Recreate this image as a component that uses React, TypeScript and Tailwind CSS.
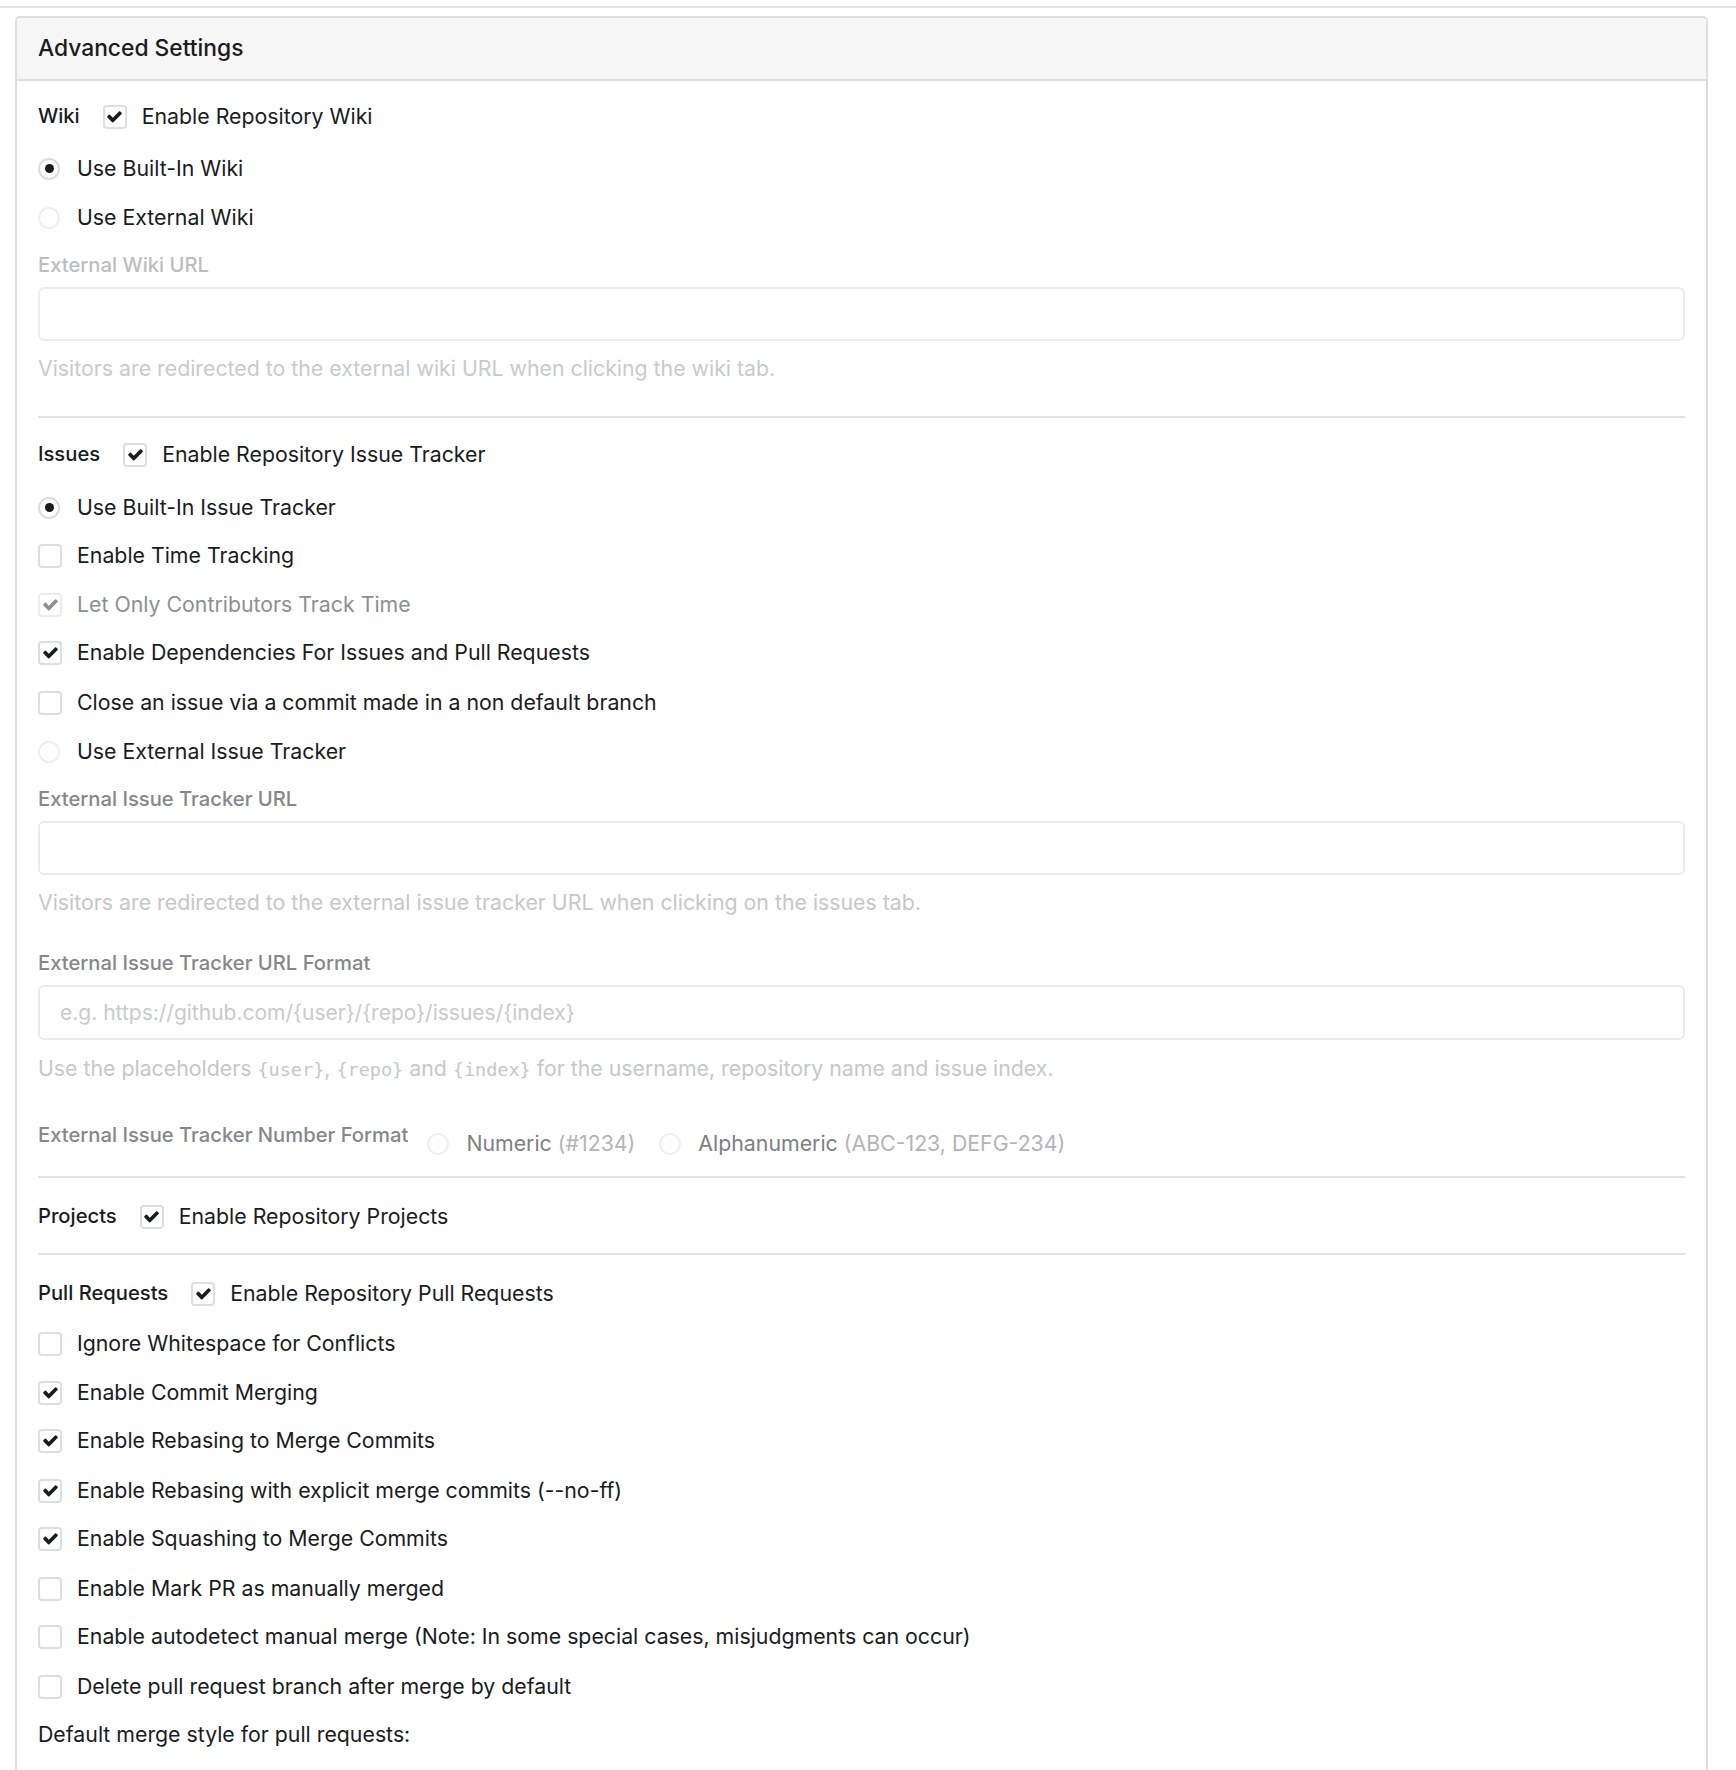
import type { ReactNode } from "react";

const FONT = { fontFamily: "Inter, 'Noto Sans', sans-serif" };
const MONO = { fontFamily: "'DejaVu Sans Mono', 'Liberation Mono', monospace" };

// heavy check glyph, same shape as the icon font's "check"
function Tick({ color }: { color: string }) {
  return (
    <svg viewBox="0 0 1792 1792" className="h-[17px] w-[17px]">
      <path
        fill={color}
        d="M1671 566q0 40-28 68l-724 724-136 136q-28 28-68 28t-68-28l-136-136-362-362q-28-28-28-68t28-68l136-136q28-28 68-28t68 28l294 295 656-657q28-28 68-28t68 28l136 136q28 28 28 68z"
      />
    </svg>
  );
}

function Box({ checked, disabled }: { checked?: boolean; disabled?: boolean }) {
  return (
    <span
      className={
        "flex h-[24px] w-[24px] shrink-0 items-center justify-center rounded-[4px] border-2 bg-white " +
        (disabled ? "border-[#ececec]" : "border-[#dedede]")
      }
    >
      {checked && <Tick color={disabled ? "#8d8f92" : "#181c21"} />}
    </span>
  );
}

function Radio({ checked, faint }: { checked?: boolean; faint?: boolean }) {
  return (
    <span className="flex h-[24px] w-[24px] shrink-0 items-center">
      <span
        className={
          "flex h-[22px] w-[22px] items-center justify-center rounded-full border-2 bg-white " +
          (faint ? "border-[#efefef]" : "border-[#dcdcdc]")
        }
      >
        {checked && <span className="h-[9px] w-[9px] rounded-full bg-[#181c21]" />}
      </span>
    </span>
  );
}

function Row({
  className = "",
  control,
  children,
  muted,
}: {
  className?: string;
  control: ReactNode;
  children: ReactNode;
  muted?: boolean;
}) {
  return (
    <div className={"flex h-[27px] items-center " + className}>
      {control}
      <span className={"ml-[15px] text-[21.3px] leading-[27px] " + (muted ? "text-[#8d8f92]" : "text-[#181c21]")}>
        {children}
      </span>
    </div>
  );
}

// inline header row: section name, then the enabling checkbox
function Toggle({ className = "", name, children }: { className?: string; name: string; children: ReactNode }) {
  return (
    <div className={"flex h-[27px] items-center " + className}>
      <span className="mr-[23px] text-[20.2px] font-medium text-[#181c21]">{name}</span>
      <Box checked />
      <span className="ml-[15px] text-[21.3px] leading-[27px] text-[#181c21]">{children}</span>
    </div>
  );
}

function Divider({ className = "" }: { className?: string }) {
  return <div className={"h-[2px] bg-[#e2e2e2] " + className} />;
}

function Code({ children }: { children: ReactNode }) {
  return (
    <code style={MONO} className="text-[18.5px]">
      {children}
    </code>
  );
}

export default function App() {
  return (
    <div style={FONT} className="min-h-screen bg-white pb-10">
      <div className="mt-[6px] h-[2px] bg-[#e3e3e3]" />

      <div className="ml-[15px] mr-[28px] mt-[8px] rounded-t-[5px] border-2 border-b-0 border-[#dedede]">
        <div className="flex h-[63px] items-center rounded-t-[4px] border-b-2 border-[#dedede] bg-[#f6f6f6] px-[21px]">
          <h4 className="text-[22.8px] font-medium text-[#181c21]">Advanced Settings</h4>
        </div>

        <div className="flex flex-col px-[21px] pt-[22px] pb-[40px]">
          {/* wiki */}
          <Toggle name="Wiki">Enable Repository Wiki</Toggle>
          <Row className="mt-[25px]" control={<Radio checked />}>Use Built-In Wiki</Row>
          <Row className="mt-[22px]" control={<Radio faint />}>Use External Wiki</Row>
          <label className="mt-[22px] text-[20.2px] font-medium leading-[24px] text-[#bcbdbf]">External Wiki URL</label>
          <input
            disabled
            className="mt-[10px] h-[54px] w-full rounded-[6px] border-2 border-[#ededed] bg-white px-[20px] text-[21px]"
          />
          <p className="mt-[15px] text-[21.3px] leading-[24px] text-[#c9cacc]">
            Visitors are redirected to the external wiki URL when clicking the wiki tab.
          </p>
          <Divider className="mt-[36px]" />

          {/* issues */}
          <Toggle className="mt-[23px]" name="Issues">Enable Repository Issue Tracker</Toggle>
          <Row className="mt-[26px]" control={<Radio checked />}>Use Built-In Issue Tracker</Row>
          <Row className="mt-[21px]" control={<Box />}>Enable Time Tracking</Row>
          <Row className="mt-[22px]" control={<Box checked disabled />} muted>
            Let Only Contributors Track Time
          </Row>
          <Row className="mt-[21px]" control={<Box checked />}>Enable Dependencies For Issues and Pull Requests</Row>
          <Row className="mt-[23px]" control={<Box />}>Close an issue via a commit made in a non default branch</Row>
          <Row className="mt-[22px]" control={<Radio faint />}>Use External Issue Tracker</Row>
          <label className="mt-[22px] text-[20.2px] font-medium leading-[24px] text-[#85878a]">
            External Issue Tracker URL
          </label>
          <input
            disabled
            className="mt-[10px] h-[54px] w-full rounded-[6px] border-2 border-[#ebebeb] bg-white px-[20px] text-[21px]"
          />
          <p className="mt-[15px] text-[21.3px] leading-[24px] text-[#c6c7c9]">
            Visitors are redirected to the external issue tracker URL when clicking on the issues tab.
          </p>
          <label className="mt-[37px] text-[20.2px] font-medium leading-[24px] text-[#85878a]">
            External Issue Tracker URL Format
          </label>
          <input
            disabled
            placeholder="e.g. https://github.com/{user}/{repo}/issues/{index}"
            className="mt-[10px] h-[55px] w-full rounded-[6px] border-2 border-[#ebebeb] bg-white px-[20px] text-[21px] placeholder:text-[#c9cacc]"
          />
          <p className="mt-[16px] text-[21.3px] leading-[24px] text-[#c6c7c9]">
            Use the placeholders <Code>{"{user}"}</Code>, <Code>{"{repo}"}</Code> and <Code>{"{index}"}</Code> for
            the username, repository name and issue index.
          </p>
          <div className="mt-[41px] flex items-start">
            <span className="text-[20.2px] font-medium leading-[24px] text-[#85878a]">
              External Issue Tracker Number Format
            </span>
            <div className="ml-[19px] mt-[7px] flex h-[27px] items-center text-[21.3px]">
              <Radio faint />
              <span className="ml-[15px] text-[#7d7f82]">
                Numeric <span className="text-[#b3b4b6]">(#1234)</span>
              </span>
              <span className="ml-[24px]" />
              <Radio faint />
              <span className="ml-[15px] text-[#7d7f82]">
                Alphanumeric <span className="text-[#b3b4b6]">(ABC-123, DEFG-234)</span>
              </span>
            </div>
          </div>
          <Divider className="mt-[19px]" />

          {/* projects */}
          <Toggle className="mt-[25px]" name="Projects">Enable Repository Projects</Toggle>
          <Divider className="mt-[23px]" />

          {/* pull requests */}
          <Toggle className="mt-[25px]" name="Pull Requests">Enable Repository Pull Requests</Toggle>
          <Row className="mt-[23px]" control={<Box />}>Ignore Whitespace for Conflicts</Row>
          <Row className="mt-[22px]" control={<Box checked />}>Enable Commit Merging</Row>
          <Row className="mt-[21px]" control={<Box checked />}>Enable Rebasing to Merge Commits</Row>
          <Row className="mt-[23px]" control={<Box checked />}>Enable Rebasing with explicit merge commits (--no-ff)</Row>
          <Row className="mt-[21px]" control={<Box checked />}>Enable Squashing to Merge Commits</Row>
          <Row className="mt-[23px]" control={<Box />}>Enable Mark PR as manually merged</Row>
          <Row className="mt-[21px]" control={<Box />}>
            Enable autodetect manual merge (Note: In some special cases, misjudgments can occur)
          </Row>
          <Row className="mt-[23px]" control={<Box />}>Delete pull request branch after merge by default</Row>
          <p className="mt-[21px] text-[21.3px] leading-[27px] text-[#181c21]">Default merge style for pull requests:</p>
        </div>
      </div>
    </div>
  );
}
